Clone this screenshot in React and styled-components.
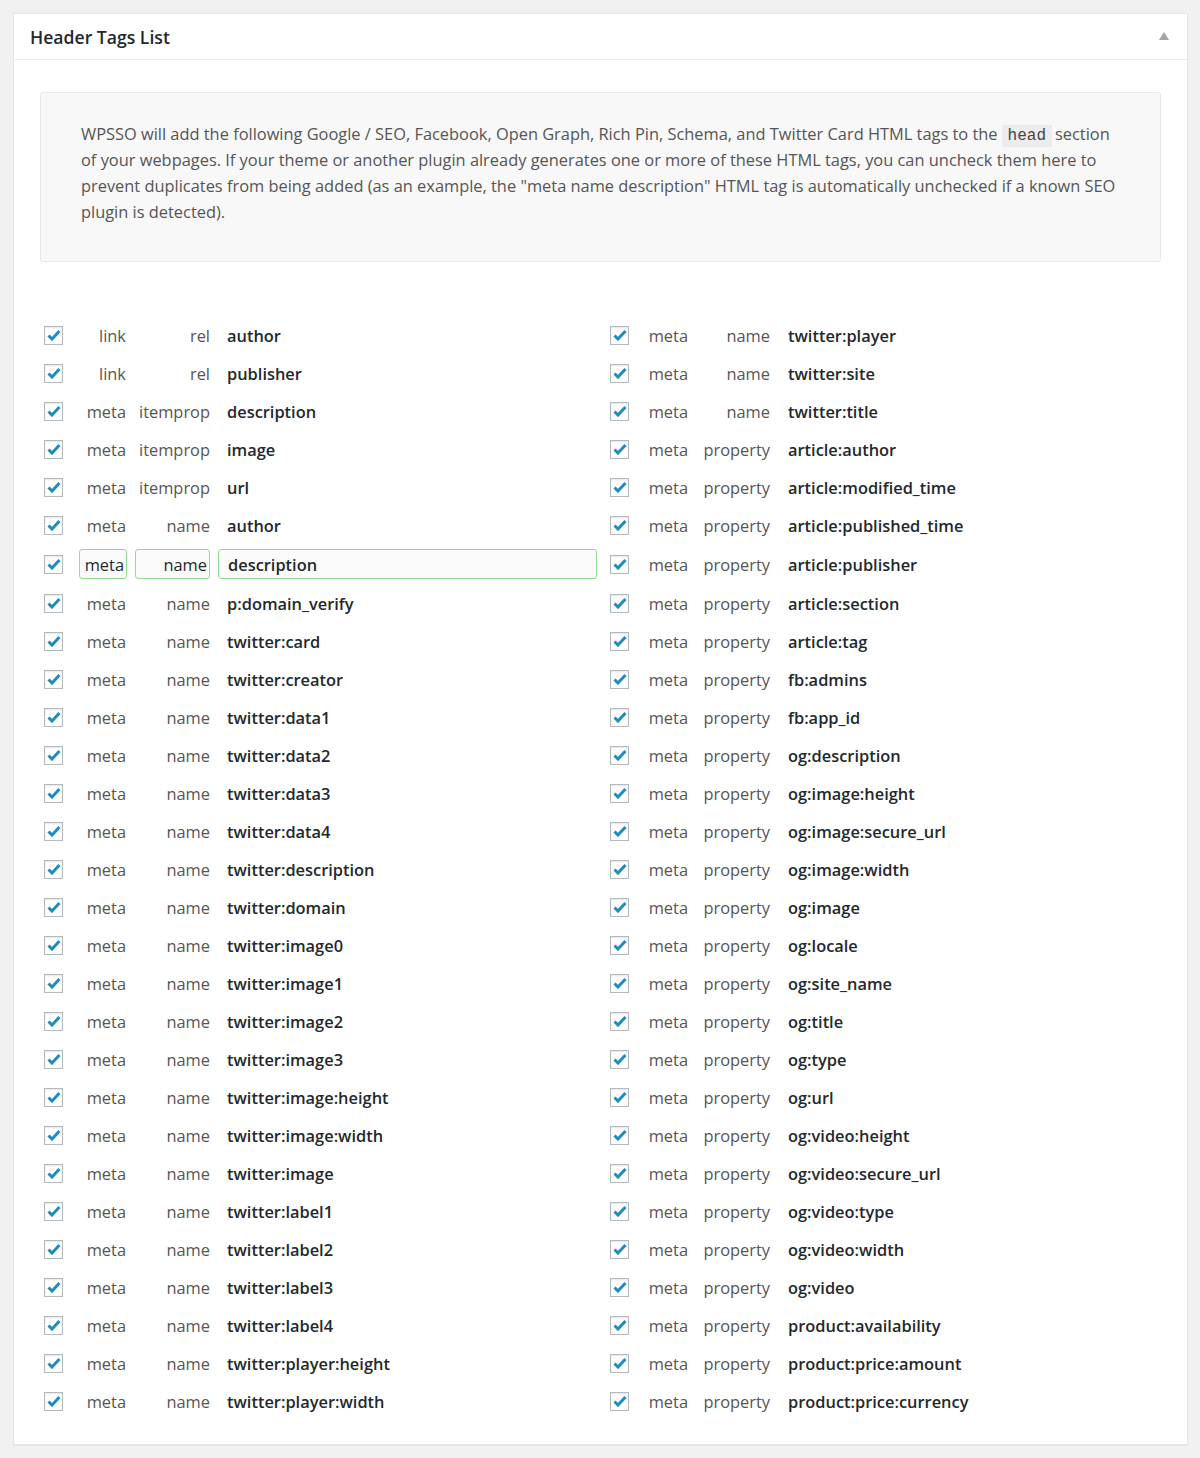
import React from "react";
import styled, { createGlobalStyle } from "styled-components";

const GlobalStyle = createGlobalStyle`
  body {
    margin: 0;
    background: #f1f1f1;
    font-family: "Open Sans", "Liberation Sans", sans-serif;
  }
`;

const Page = styled.div`
  padding: 13px 12px 14px 13px;
`;

const Panel = styled.div`
  background: #fff;
  border: 1px solid #e5e5e5;
  box-shadow: 0 1px 1px rgba(0, 0, 0, 0.04);
`;

const Header = styled.div`
  display: flex;
  align-items: center;
  justify-content: space-between;
  height: 45px;
  padding: 0 18px 0 16px;
  border-bottom: 1px solid #eeeeee;
`;

const Title = styled.h2`
  margin: 0;
  font-size: 17.6px;
  font-weight: 600;
  color: #23282d;
`;

const Toggle = styled.span`
  width: 0;
  height: 0;
  border-left: 5px solid transparent;
  border-right: 5px solid transparent;
  border-bottom: 8px solid #a0a5aa;
  margin-top: -2px;
`;

const Body = styled.div`
  padding: 32px 26px 24px 26px;
`;

const Info = styled.div`
  background: #f8f8f8;
  border: 1px solid #e8e8e8;
  border-radius: 3px;
  padding: 28px 38px 36px 40px;
`;

const InfoText = styled.p`
  margin: 0;
  font-size: 16.4px;
  line-height: 26px;
  color: #555;
`;

const Code = styled.code`
  display: inline-block;
  font-family: "Liberation Mono", monospace;
  font-size: 16px;
  line-height: 22px;
  background: #ececec;
  padding: 0 6px;
  margin: 0 3px 0 4px;
  color: #444;
`;

const Table = styled.div`
  margin-top: 54px;
`;

const Row = styled.div`
  display: grid;
  grid-template-columns: 31px 48px 75px 379px 31px 48px 71px 1fr;
  column-gap: 8px;
  align-items: center;
  height: ${(p) => (p.$tall ? 40 : 38)}px;
`;

const BoxCell = styled.div`
  display: flex;
  padding-left: ${(p) => p.$offset}px;
`;

const Check = styled.span`
  width: 19px;
  height: 19px;
  box-sizing: border-box;
  border: 1px solid #b4b9be;
  background: #fff;
  box-shadow: inset 0 1px 2px rgba(0, 0, 0, 0.1);
  display: flex;
  align-items: center;
  justify-content: center;
`;

const Cell = styled.div`
  font-size: 16.4px;
  color: #555;
  text-align: right;
  padding-right: ${(p) => p.$pad}px;
  white-space: nowrap;
`;

const Value = styled.div`
  font-size: 16.4px;
  font-weight: 600;
  color: #23282d;
  padding-left: 9px;
  white-space: nowrap;
`;

const Field = styled.div`
  box-sizing: border-box;
  height: 30px;
  display: flex;
  align-items: center;
  justify-content: ${(p) => (p.$left ? "flex-start" : "flex-end")};
  padding: 0 ${(p) => (p.$left ? 0 : 2)}px 0 ${(p) => (p.$left ? 9 : 3)}px;
  border: 1px solid #90dd8e;
  border-radius: 3px;
  background: #fbfbfb;
  font-size: 16.4px;
  color: #23282d;
  white-space: nowrap;
`;

const FieldValue = styled(Field)`
  font-weight: 600;
`;

const CheckMark = () => (
  <Check>
    <svg width="14" height="12" viewBox="0 0 14 12">
      <path d="M1.5 6.5 L5 10 L12.5 2" fill="none" stroke="#1e8cbe" strokeWidth="3" />
    </svg>
  </Check>
);

const left = [
  ["link", "rel", "author"],
  ["link", "rel", "publisher"],
  ["meta", "itemprop", "description"],
  ["meta", "itemprop", "image"],
  ["meta", "itemprop", "url"],
  ["meta", "name", "author"],
  ["meta", "name", "description"],
  ["meta", "name", "p:domain_verify"],
  ["meta", "name", "twitter:card"],
  ["meta", "name", "twitter:creator"],
  ["meta", "name", "twitter:data1"],
  ["meta", "name", "twitter:data2"],
  ["meta", "name", "twitter:data3"],
  ["meta", "name", "twitter:data4"],
  ["meta", "name", "twitter:description"],
  ["meta", "name", "twitter:domain"],
  ["meta", "name", "twitter:image0"],
  ["meta", "name", "twitter:image1"],
  ["meta", "name", "twitter:image2"],
  ["meta", "name", "twitter:image3"],
  ["meta", "name", "twitter:image:height"],
  ["meta", "name", "twitter:image:width"],
  ["meta", "name", "twitter:image"],
  ["meta", "name", "twitter:label1"],
  ["meta", "name", "twitter:label2"],
  ["meta", "name", "twitter:label3"],
  ["meta", "name", "twitter:label4"],
  ["meta", "name", "twitter:player:height"],
  ["meta", "name", "twitter:player:width"],
];

const right = [
  ["meta", "name", "twitter:player"],
  ["meta", "name", "twitter:site"],
  ["meta", "name", "twitter:title"],
  ["meta", "property", "article:author"],
  ["meta", "property", "article:modified_time"],
  ["meta", "property", "article:published_time"],
  ["meta", "property", "article:publisher"],
  ["meta", "property", "article:section"],
  ["meta", "property", "article:tag"],
  ["meta", "property", "fb:admins"],
  ["meta", "property", "fb:app_id"],
  ["meta", "property", "og:description"],
  ["meta", "property", "og:image:height"],
  ["meta", "property", "og:image:secure_url"],
  ["meta", "property", "og:image:width"],
  ["meta", "property", "og:image"],
  ["meta", "property", "og:locale"],
  ["meta", "property", "og:site_name"],
  ["meta", "property", "og:title"],
  ["meta", "property", "og:type"],
  ["meta", "property", "og:url"],
  ["meta", "property", "og:video:height"],
  ["meta", "property", "og:video:secure_url"],
  ["meta", "property", "og:video:type"],
  ["meta", "property", "og:video:width"],
  ["meta", "property", "og:video"],
  ["meta", "property", "product:availability"],
  ["meta", "property", "product:price:amount"],
  ["meta", "property", "product:price:currency"],
];

const HIGHLIGHT = 6;

export default function App() {
  return (
    <>
      <GlobalStyle />
      <Page>
        <Panel>
          <Header>
            <Title>Header Tags List</Title>
            <Toggle />
          </Header>
          <Body>
            <Info>
              <InfoText>
                WPSSO will add the following Google / SEO, Facebook, Open Graph, Rich Pin, Schema, and
                Twitter Card HTML tags to the<Code>head</Code>section of your webpages. If your theme or
                another plugin already generates one or more of these HTML tags, you can uncheck them here
                to prevent duplicates from being added (as an example, the "meta name description" HTML tag
                is automatically unchecked if a known SEO plugin is detected).
              </InfoText>
            </Info>
            <Table>
              {left.map((l, i) => {
                const r = right[i];
                const hl = i === HIGHLIGHT;
                return (
                  <Row key={l[2] + i} $tall={hl}>
                    <BoxCell $offset={4}>
                      <CheckMark />
                    </BoxCell>
                    {hl ? (
                      <>
                        <Field>{l[0]}</Field>
                        <Field>{l[1]}</Field>
                        <FieldValue $left>{l[2]}</FieldValue>
                      </>
                    ) : (
                      <>
                        <Cell $pad={1}>{l[0]}</Cell>
                        <Cell $pad={0}>{l[1]}</Cell>
                        <Value>{l[2]}</Value>
                      </>
                    )}
                    <BoxCell $offset={5}>
                      <CheckMark />
                    </BoxCell>
                    <Cell $pad={4}>{r[0]}</Cell>
                    <Cell $pad={1}>{r[1]}</Cell>
                    <Value>{r[2]}</Value>
                  </Row>
                );
              })}
            </Table>
          </Body>
        </Panel>
      </Page>
    </>
  );
}
